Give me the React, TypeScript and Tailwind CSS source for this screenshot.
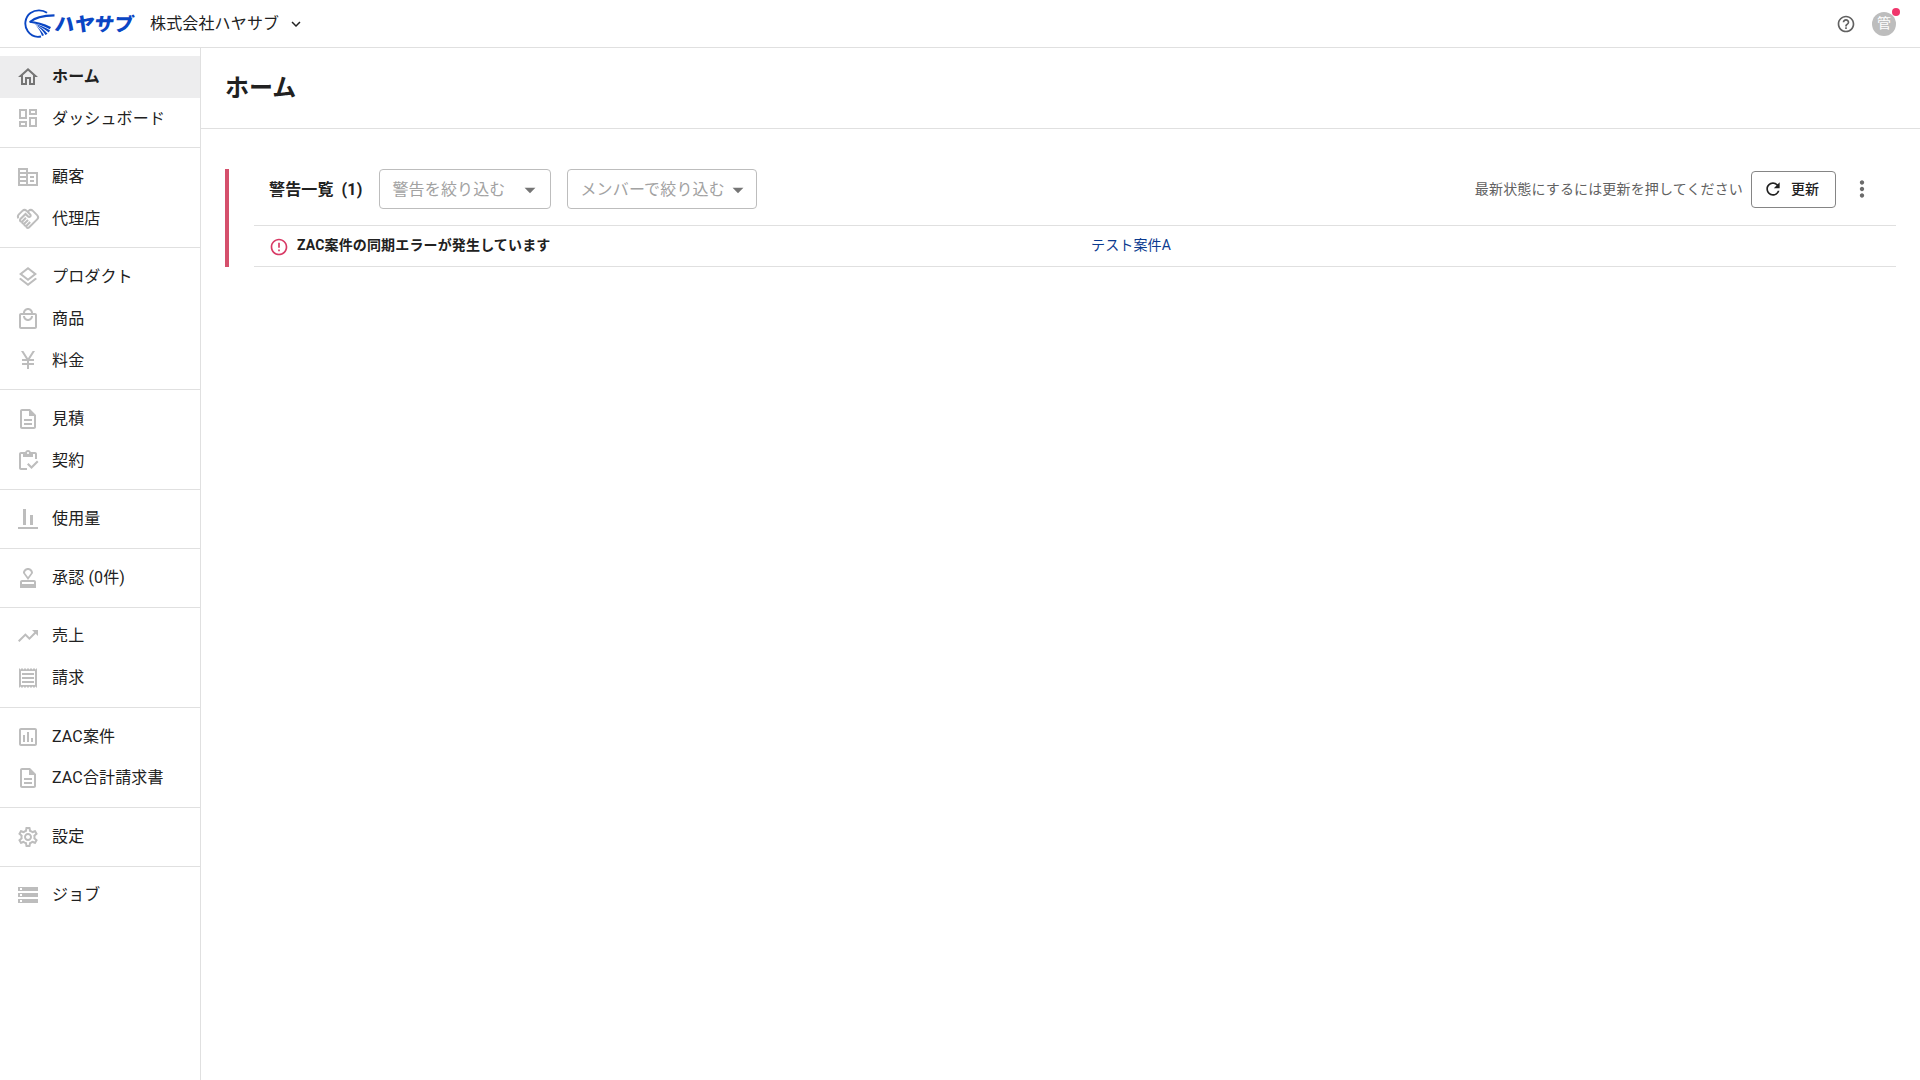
import type { IconType } from "react-icons";
import {
  MdArrowDropDown,
  MdCurrencyYen,
  MdErrorOutline,
  MdHelpOutline,
  MdKeyboardArrowDown,
  MdMoreVert,
  MdOutlineAlignVerticalBottom,
  MdOutlineApproval,
  MdOutlineAssessment,
  MdOutlineCorporateFare,
  MdOutlineDashboard,
  MdOutlineDescription,
  MdOutlineHandshake,
  MdOutlineHome,
  MdOutlineInventory,
  MdOutlineLayers,
  MdOutlineLocalMall,
  MdOutlineReceipt,
  MdOutlineSettings,
  MdRefresh,
  MdStorage,
  MdTrendingUp,
} from "react-icons/md";

type NavItem = { label: string; icon: IconType; active?: boolean };

const navGroups: NavItem[][] = [
  [
    { label: "ホーム", icon: MdOutlineHome, active: true },
    { label: "ダッシュボード", icon: MdOutlineDashboard },
  ],
  [
    { label: "顧客", icon: MdOutlineCorporateFare },
    { label: "代理店", icon: MdOutlineHandshake },
  ],
  [
    { label: "プロダクト", icon: MdOutlineLayers },
    { label: "商品", icon: MdOutlineLocalMall },
    { label: "料金", icon: MdCurrencyYen },
  ],
  [
    { label: "見積", icon: MdOutlineDescription },
    { label: "契約", icon: MdOutlineInventory },
  ],
  [{ label: "使用量", icon: MdOutlineAlignVerticalBottom }],
  [{ label: "承認 (0件)", icon: MdOutlineApproval }],
  [
    { label: "売上", icon: MdTrendingUp },
    { label: "請求", icon: MdOutlineReceipt },
  ],
  [
    { label: "ZAC案件", icon: MdOutlineAssessment },
    { label: "ZAC合計請求書", icon: MdOutlineDescription },
  ],
  [{ label: "設定", icon: MdOutlineSettings }],
  [{ label: "ジョブ", icon: MdStorage }],
];

function Logo() {
  return (
    <svg width="116" height="30" viewBox="0 0 116 30" className="-mr-1 shrink-0">
      <g fill="none" stroke="#0a46c4">
        <path d="M23 3.800C18.500.6 11.500.5 6.500 4 .8 8.300-.3 16.500 3.800 22.300 7 26.800 12 28.600 17 27.500" strokeWidth="1.900" />
        <path d="M6 13C10.500 8.500 18 6.600 30.500 6.400" strokeWidth="2.200" />
      </g>
      <g fill="#0a46c4">
        <path d="M5.500 12C12 12.200 20 14.500 27 18L25.800 20.200C19 16.700 12 14.400 5.500 13.800z" />
        <path d="M8.500 14.200C15 15.500 21.500 18.500 26 21.300L24.800 23.500C19.500 19.200 14 16 8.500 14.200z" />
        <path d="M11.500 15.800C16.500 18 21 21.500 23.500 24.800L21.500 26C19 22 15.500 18.500 11.500 15.800z" />
        <path d="M12 17C16 20 18.500 23.300 20 26.300L18 27C17 23.500 15 20 12 17z" />
      </g>
      <text
        x="29.500"
        y="21.800"
        textLength="79"
        lengthAdjust="spacingAndGlyphs"
        transform="translate(3.500 0) skewX(-8)"
        fill="#0a46c4"
        className="font-['Noto_Sans_CJK_JP',sans-serif] text-[19px] font-black"
      >
        ハヤサブ
      </text>
    </svg>
  );
}

function Header() {
  return (
    <header className="flex h-12 shrink-0 items-center border-b border-[#e0e0e0] pr-6 pl-6">
      <Logo />
      <button className="ml-3.5 flex items-center gap-2">
        <span className="text-base leading-6 tracking-[0.00938em]">
          株式会社ハヤサブ
        </span>
        <MdKeyboardArrowDown size={18} />
      </button>
      <div className="ml-auto flex items-center gap-4">
        <MdHelpOutline size={20} className="text-[#616161]" />
        <div className="relative flex size-6 items-center justify-center rounded-full bg-[#bdbdbd] text-sm text-white">
          <span className="-mt-0.5">管</span>
          <span className="absolute -top-1 -right-1 size-2 rounded-full bg-[#f0366b]" />
        </div>
      </div>
    </header>
  );
}

function Sidebar() {
  return (
    <nav className="w-[201px] shrink-0 border-r border-[#e0e0e0]">
      {navGroups.map((group, i) => (
        <ul key={i} className="border-b border-[#e0e0e0] py-2 last:border-b-0">
          {group.map(({ label, icon: Icon, active }) => (
            <li
              key={label}
              className={
                active
                  ? "flex h-[41.6px] items-center gap-3 bg-[#ededee] px-4 font-bold"
                  : "flex h-[41.6px] items-center gap-3 px-4"
              }
            >
              <Icon
                size={24}
                className={active ? "text-[#757575]" : "text-[#bdbdbd]"}
              />
              <span className="mt-[0.3px] text-base leading-6 tracking-[0.00938em]">
                {label}
              </span>
            </li>
          ))}
        </ul>
      ))}
    </nav>
  );
}

function FilterSelect({ label, className }: { label: string; className: string }) {
  return (
    <button
      className={`flex h-10 items-center justify-between rounded border border-[#bdbdbd] pr-2 pl-3 text-[#a2a2a2] ${className}`}
    >
      <span className="mt-0.5 text-base leading-6 tracking-[0.00938em] whitespace-nowrap">
        {label}
      </span>
      <MdArrowDropDown size={26} className="mt-0.5 -mr-px shrink-0 text-[#757575]" />
    </button>
  );
}

function WarningPanel() {
  return (
    <section className="mt-10 mr-6 ml-6 flex h-[98px] border-l-4 border-[#d5506c]">
      <div className="ml-[25px] flex flex-1 flex-col">
        <div className="flex h-[57px] items-start border-b border-[#e0e0e0] pl-[15px]">
          <h2 className="mr-[17px] flex h-10 items-center gap-2 pt-0.5 text-base font-bold tracking-[0.00938em]">
            <span>警告一覧</span>
            <span>(1)</span>
          </h2>
          <FilterSelect label="警告を絞り込む" className="w-[172px]" />
          <FilterSelect label="メンバーで絞り込む" className="ml-4 w-[190px]" />
          <div className="mr-[22px] ml-auto flex h-10 items-center">
            <p className="text-sm tracking-[0.01071em] text-[#616161]">
              最新状態にするには更新を押してください
            </p>
            <button className="ml-2 flex h-[37px] w-[85px] items-center gap-2 rounded border border-[#858585] pl-[11px] text-sm font-medium">
              <MdRefresh size={20} />
              更新
            </button>
            <MdMoreVert size={26} className="mr-[-1px] ml-[13px] text-[#6b6b6b]" />
          </div>
        </div>
        <div className="flex h-[41px] items-center border-b border-[#e0e0e0] pb-[3px] pl-[15px] text-sm tracking-[0.01071em]">
          <MdErrorOutline size={20} className="mt-1 text-[#d83a65]" />
          <p className="ml-2 w-[794px] font-bold">
            ZAC案件の同期エラーが発生しています
          </p>
          <a className="text-[#0b3a8f]">テスト案件A</a>
        </div>
      </div>
    </section>
  );
}

export default function App() {
  return (
    <div className="flex h-screen flex-col bg-white font-[Roboto,'Noto_Sans_CJK_JP',sans-serif] text-[#212121]">
      <Header />
      <div className="flex flex-1">
        <Sidebar />
        <main className="flex-1">
          <div className="flex h-[81px] items-center border-b border-[#e0e0e0] px-6">
            <h1 className="text-2xl font-bold">ホーム</h1>
          </div>
          <WarningPanel />
        </main>
      </div>
    </div>
  );
}
